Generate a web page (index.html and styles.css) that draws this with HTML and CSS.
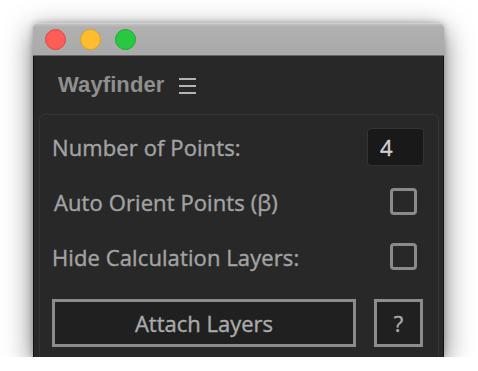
FILE: index.html
```html
<!DOCTYPE html>
<html>
<head>
<meta charset="utf-8">
<title>Wayfinder</title>
<link rel="stylesheet" href="styles.css">
</head>
<body>
<div class="stage">
<div class="window">
	<div class="titlebar">
		<span class="light red"></span><span class="light yellow"></span><span class="light green"></span>
	</div>
	<div class="body">
		<h4 class="head">Wayfinder <span class="burger"><i></i><i></i><i></i></span></h4>
		<div class="panel">
			<div class="row"><span class="label">Number of Points:</span><input type="text" class="num" value="4"></div>
			<div class="row"><span class="label beta">Auto Orient Points (β)</span><span class="check"></span></div>
			<div class="row"><span class="label">Hide Calculation Layers:</span><span class="check"></span></div>
			<div class="actions"><button class="btn attach">Attach Layers</button><button class="btn help">?</button></div>
		</div>
	</div>
</div>
</div>
</body>
</html>
```

FILE: styles.css
```css
html, body {margin: 0; background: #fff; height: 371px; overflow: hidden;}
.stage {padding: 23px 0 0 33px; height: 334px; overflow: hidden;}
.window {width: 411px; height: 334px; border-radius: 5px 5px 0 0; overflow: hidden; box-shadow: 0 8px 28px rgba(0,0,0,0.55), 0 0 6px rgba(0,0,0,0.25);}
.titlebar {height: 31px; display: flex; align-items: center; gap: 14px; padding-left: 12px; background: linear-gradient(#c2c2c2, #b0b0b0 10%, #aaaaaa); border-top: 1px solid #d0d0d0; border-bottom: 1px solid #666;}
.light {width: 21px; height: 21px; border-radius: 50%; box-sizing: border-box;}
.red {background: #fd5d57; border: 1px solid #de463f;}
.yellow {background: #fdbd2f; border: 1px solid #dea123;}
.green {background: #29c841; border: 1px solid #1aab2c;}
.body {height: 302px; background: #282828; border-left: 1px solid #141414; border-right: 1px solid #141414; padding: 0 4px 0 5px;}
.head {margin: 0; height: 58px; display: flex; align-items: center; padding-left: 19px; font: bold 22px "Liberation Sans", Arial, sans-serif; color: #8f8f8f; letter-spacing: 0.1px;}
.burger {display: inline-flex; flex-direction: column; gap: 5px; margin-left: 15px; margin-top: 2px;}
.burger i {display: block; width: 17px; height: 2px; background: #b4b4b4;}
.panel {border: 1px solid #353535; border-bottom: 0; border-radius: 6px 6px 0 0; background: #282828; padding: 4px 14px 0 12px; height: 240px; font: 22px "Open Sans", sans-serif; color: #a3a3a3; -webkit-text-stroke: 0.4px currentColor;}
.row {height: 55px; display: flex; align-items: center; justify-content: space-between;}
.label {letter-spacing: 0.1px;}
.beta {padding-left: 2px;}
.num {width: 57px; height: 38px; box-sizing: border-box; background: #191919; border: 1px solid #333; border-radius: 4px; color: #d2d2d2; font: 22px "Open Sans", sans-serif; -webkit-text-stroke: 0.4px currentColor; padding: 0 0 0 12px; outline: none;}
.check {width: 27px; height: 27px; box-sizing: border-box; border: 3px solid #8a8a8a; border-radius: 4px; margin-right: 7px;}
.actions {display: flex; justify-content: space-between; margin-top: 15px; padding-right: 1px;}
.btn {height: 48px; box-sizing: border-box; background: #202020; border: 3px solid #8c8c8c; color: #aaaaaa; font: 22px "Open Sans", sans-serif; -webkit-text-stroke: 0.4px currentColor; padding: 0; margin: 0;}
.attach {width: 304px;}
.help {width: 49px;}
```
